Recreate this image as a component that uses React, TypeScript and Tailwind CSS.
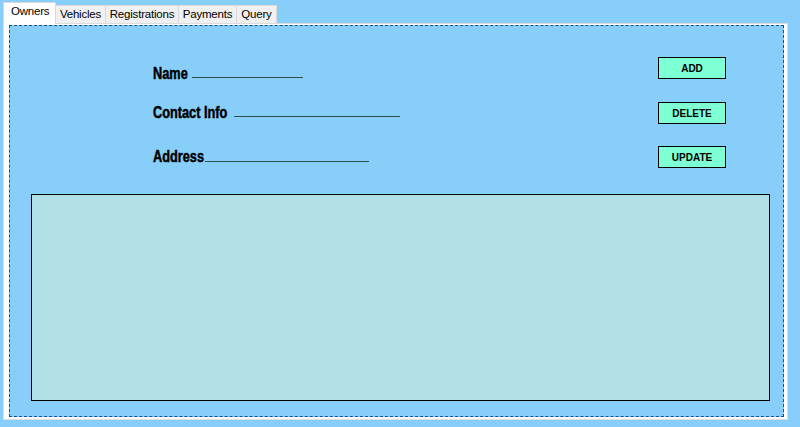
import React from 'react';

const tabs = [
  { label: 'Owners', w: 'w-[53px]' },
  { label: 'Vehicles', w: 'w-[51px]' },
  { label: 'Registrations', w: 'w-[74px]' },
  { label: 'Payments', w: 'w-[59px]' },
  { label: 'Query', w: 'w-[41px]' },
];

const fields = [
  { label: 'Name', lw: 'w-[39px]', line: 'w-[111px]', mt: 'mt-0', lmt: 'mt-[15px]' },
  { label: 'Contact Info', lw: 'w-[81px]', line: 'w-[166px]', mt: 'mt-[19px]', lmt: 'mt-[15px]' },
  { label: 'Address', lw: 'w-[52px]', line: 'w-[164px]', mt: 'mt-[24px]', lmt: 'mt-[16px]' },
];

const buttons = [
  { label: 'ADD', mt: 'mt-0' },
  { label: 'DELETE', mt: 'mt-[23px]' },
  { label: 'UPDATE', mt: 'mt-[22px]' },
];

export default function App() {
  return (
    <div className="w-[800px] h-[427px] bg-[#87cefa] overflow-hidden font-['Liberation_Sans',sans-serif]">
      {/* tab strip */}
      <div className="flex items-end h-[23px] pl-[3px]">
        {tabs.map((t, i) =>
          i === 0 ? (
            <div
              key={t.label}
              className={`${t.w} h-[22px] -mb-px relative z-10 bg-white border border-b-0 border-[#d9d9d9] text-[11.5px] leading-none text-black pt-[3px] pl-[7px] whitespace-nowrap tracking-[-0.2px]`}
            >
              {t.label}
            </div>
          ) : (
            <div
              key={t.label}
              className={`${t.w} h-[18px] -ml-px bg-[#f0f0f0] border border-b-0 border-[#d9d9d9] text-[11.5px] leading-none text-black pt-[3px] text-center whitespace-nowrap tracking-[-0.2px]`}
            >
              {t.label}
            </div>
          )
        )}
      </div>

      {/* tab page */}
      <div className="ml-[3px] w-[785px] h-[397px] bg-white border border-[#dcdcdc] pl-[5px] pr-[3px] pt-px pb-[2px]">
        <div className="h-full bg-[#87cefa] border border-dashed border-[#1b4f86] flex flex-col">
          <div className="flex justify-between pl-[143px] pr-[57px]">
            <div className="flex flex-col pt-[36px]">
              {fields.map((f) => (
                <div key={f.label} className={`flex items-start ${f.mt}`}>
                  <div className={`${f.lw} h-[20px] whitespace-nowrap`}>
                    <span className="inline-block origin-left scale-x-[0.75] leading-[20px] text-[17px] font-bold text-black [-webkit-text-stroke:0.5px_black]">
                      {f.label}
                    </span>
                  </div>
                  <div className={`${f.line} h-px bg-[#2f4f4f] ${f.lmt}`} />
                </div>
              ))}
            </div>
            <div className="flex flex-col pt-[31px]">
              {buttons.map((b) => (
                <div
                  key={b.label}
                  className={`${b.mt} w-[68px] h-[22px] bg-[#7fffd4] border border-black flex items-center justify-center text-[10px] font-bold text-black`}
                >
                  {b.label}
                </div>
              ))}
            </div>
          </div>
          <div className="flex-1 mt-[26px] ml-[21px] mr-[13px] mb-[15px] bg-[#b0e0e6] border border-black" />
        </div>
      </div>
    </div>
  );
}
